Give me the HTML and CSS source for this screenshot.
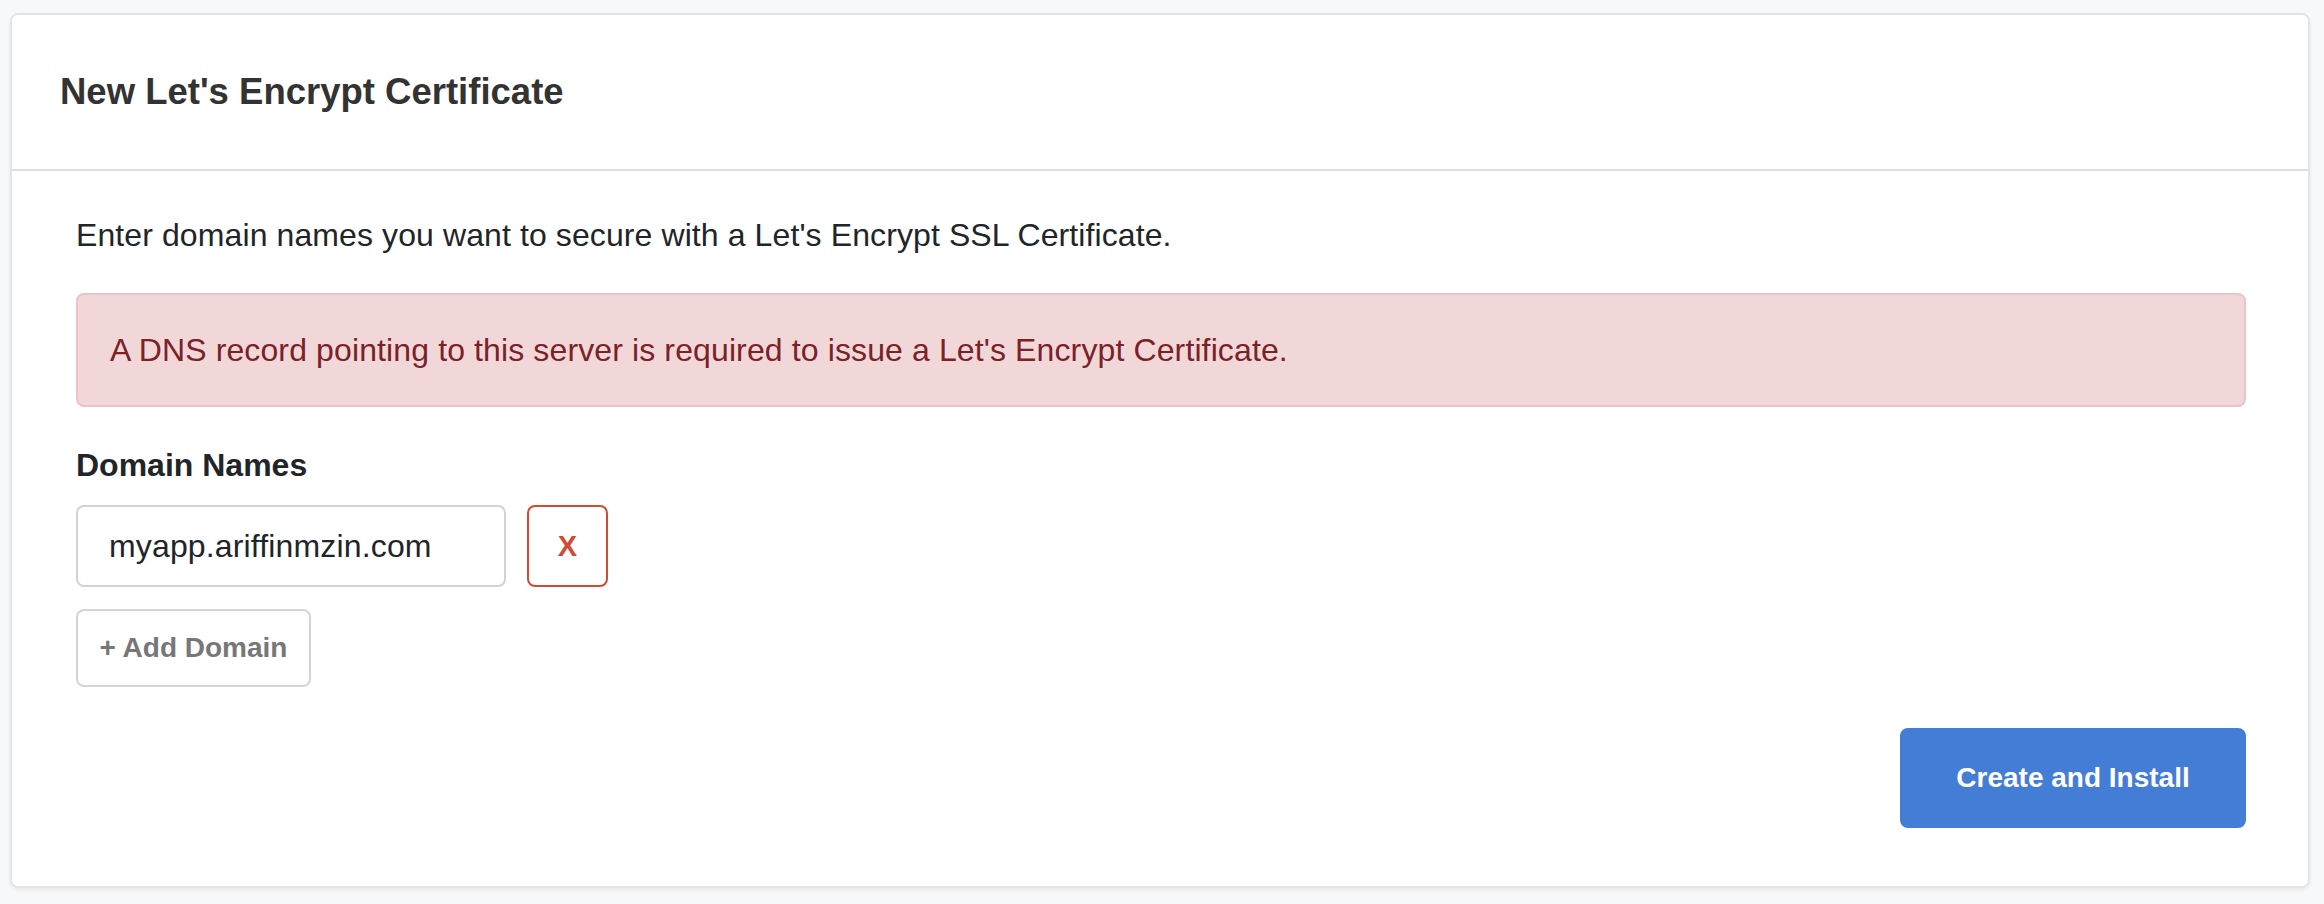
FILE: index.html
```html
<!DOCTYPE html>
<html lang="en">
<head>
<meta charset="utf-8">
<title>New Let's Encrypt Certificate</title>
<link rel="stylesheet" href="styles.css">
</head>
<body>
<div class="page">
  <section class="card">
    <header class="card-header">
      <h1 class="card-title">New Let's Encrypt Certificate</h1>
    </header>
    <div class="card-body">
      <p class="intro">Enter domain names you want to secure with a Let's Encrypt SSL Certificate.</p>
      <div class="alert">A DNS record pointing to this server is required to issue a Let's Encrypt Certificate.</div>
      <label class="field-label" for="domain-1">Domain Names</label>
      <div class="domain-row">
        <input class="domain-input" id="domain-1" type="text" value="myapp.ariffinmzin.com">
        <button class="btn-remove" type="button">X</button>
      </div>
      <div class="add-row">
        <button class="btn-add" type="button">+ Add Domain</button>
      </div>
      <div class="actions">
        <button class="btn-primary" type="button">Create and Install</button>
      </div>
    </div>
  </section>
</div>
</body>
</html>
```

FILE: styles.css
```css
html, body {
  margin: 0;
  padding: 0;
  background: #f7f8fa;
}

body {
  font-family: "Liberation Sans", Arial, Helvetica, sans-serif;
  color: #212529;
}

.page {
  padding: 13px 14px 16px 10px;
}

.card {
  background: #ffffff;
  border: 2px solid #e4e4e4;
  border-radius: 8px;
  box-shadow: 0 2px 4px rgba(0, 0, 0, 0.06);
}

.card-header {
  height: 154px;
  display: flex;
  align-items: center;
  padding: 0 48px;
  border-bottom: 2px solid #dfdfdf;
}

.card-title {
  margin: 0;
  font-size: 36.5px;
  font-weight: bold;
  color: #333333;
  line-height: 1.2;
}

.card-body {
  padding: 40px 62px 58px 64px;
}

.intro {
  margin: 0 0 34px 0;
  font-size: 32px;
  line-height: 48px;
  letter-spacing: 0.1px;
  color: #212529;
}

.alert {
  background: #f2d7d9;
  border: 2px solid #ecc3c6;
  border-radius: 8px;
  padding: 31px 32px;
  font-size: 32px;
  line-height: 48px;
  letter-spacing: 0.12px;
  color: #7a2228;
}

.field-label {
  display: block;
  margin-top: 34px;
  font-size: 32px;
  line-height: 48px;
  font-weight: bold;
  color: #212529;
}

.domain-row {
  display: flex;
  gap: 21px;
  margin-top: 16px;
}

.domain-input {
  box-sizing: border-box;
  width: 430px;
  height: 82px;
  margin: 0;
  padding: 0 30px 0 31px;
  border: 2px solid #cfd4d9;
  border-radius: 8px;
  font-family: "Liberation Sans", Arial, Helvetica, sans-serif;
  font-size: 32px;
  letter-spacing: 0.15px;
  color: #212529;
  background: #ffffff;
  outline: none;
}

.btn-remove {
  box-sizing: border-box;
  width: 81px;
  height: 82px;
  margin: 0;
  padding: 0;
  border: 2px solid #cf4b34;
  border-radius: 8px;
  background: #ffffff;
  color: #cf4b34;
  font-family: "Liberation Sans", Arial, Helvetica, sans-serif;
  font-size: 29px;
  font-weight: bold;
}

.add-row {
  display: flex;
  margin-top: 22px;
}

.btn-add {
  box-sizing: border-box;
  width: 235px;
  height: 78px;
  margin: 0;
  padding: 0;
  border: 2px solid #d4d4d4;
  border-radius: 8px;
  background: #ffffff;
  color: #777777;
  font-family: "Liberation Sans", Arial, Helvetica, sans-serif;
  font-size: 28px;
  font-weight: bold;
}

.actions {
  display: flex;
  justify-content: flex-end;
  margin-top: 41px;
}

.btn-primary {
  box-sizing: border-box;
  width: 346px;
  height: 100px;
  margin: 0;
  padding: 0;
  border: none;
  border-radius: 8px;
  background: #437dd6;
  color: #ffffff;
  font-family: "Liberation Sans", Arial, Helvetica, sans-serif;
  font-size: 28px;
  font-weight: bold;
}
```
